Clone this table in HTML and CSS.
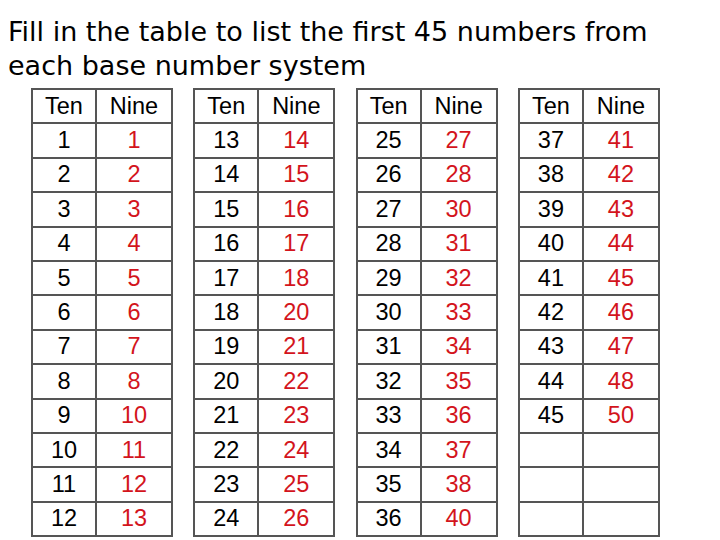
FILE: index.html
```html
<!DOCTYPE html>
<html>
<head>
<meta charset="utf-8">
<link rel="stylesheet" href="styles.css">
</head>
<body>
<h1 class="title">Fill in the table to list the first 45 numbers from<br>each base number system</h1>
<div class="tables">
  <div class="grid">
    <div class="cell head">Ten</div><div class="cell head">Nine</div>
    <div class="cell">1</div><div class="cell red">1</div>
    <div class="cell">2</div><div class="cell red">2</div>
    <div class="cell">3</div><div class="cell red">3</div>
    <div class="cell">4</div><div class="cell red">4</div>
    <div class="cell">5</div><div class="cell red">5</div>
    <div class="cell">6</div><div class="cell red">6</div>
    <div class="cell">7</div><div class="cell red">7</div>
    <div class="cell">8</div><div class="cell red">8</div>
    <div class="cell">9</div><div class="cell red">10</div>
    <div class="cell">10</div><div class="cell red">11</div>
    <div class="cell">11</div><div class="cell red">12</div>
    <div class="cell">12</div><div class="cell red">13</div>
  </div>
  <div class="grid">
    <div class="cell head">Ten</div><div class="cell head">Nine</div>
    <div class="cell">13</div><div class="cell red">14</div>
    <div class="cell">14</div><div class="cell red">15</div>
    <div class="cell">15</div><div class="cell red">16</div>
    <div class="cell">16</div><div class="cell red">17</div>
    <div class="cell">17</div><div class="cell red">18</div>
    <div class="cell">18</div><div class="cell red">20</div>
    <div class="cell">19</div><div class="cell red">21</div>
    <div class="cell">20</div><div class="cell red">22</div>
    <div class="cell">21</div><div class="cell red">23</div>
    <div class="cell">22</div><div class="cell red">24</div>
    <div class="cell">23</div><div class="cell red">25</div>
    <div class="cell">24</div><div class="cell red">26</div>
  </div>
  <div class="grid">
    <div class="cell head">Ten</div><div class="cell head">Nine</div>
    <div class="cell">25</div><div class="cell red">27</div>
    <div class="cell">26</div><div class="cell red">28</div>
    <div class="cell">27</div><div class="cell red">30</div>
    <div class="cell">28</div><div class="cell red">31</div>
    <div class="cell">29</div><div class="cell red">32</div>
    <div class="cell">30</div><div class="cell red">33</div>
    <div class="cell">31</div><div class="cell red">34</div>
    <div class="cell">32</div><div class="cell red">35</div>
    <div class="cell">33</div><div class="cell red">36</div>
    <div class="cell">34</div><div class="cell red">37</div>
    <div class="cell">35</div><div class="cell red">38</div>
    <div class="cell">36</div><div class="cell red">40</div>
  </div>
  <div class="grid">
    <div class="cell head">Ten</div><div class="cell head">Nine</div>
    <div class="cell">37</div><div class="cell red">41</div>
    <div class="cell">38</div><div class="cell red">42</div>
    <div class="cell">39</div><div class="cell red">43</div>
    <div class="cell">40</div><div class="cell red">44</div>
    <div class="cell">41</div><div class="cell red">45</div>
    <div class="cell">42</div><div class="cell red">46</div>
    <div class="cell">43</div><div class="cell red">47</div>
    <div class="cell">44</div><div class="cell red">48</div>
    <div class="cell">45</div><div class="cell red">50</div>
    <div class="cell"></div><div class="cell"></div>
    <div class="cell"></div><div class="cell"></div>
    <div class="cell"></div><div class="cell"></div>
  </div>
</div>
</body>
</html>
```
FILE: styles.css
```css
html, body {
  margin: 0;
  padding: 0;
  background: #ffffff;
}
body {
  width: 720px;
  height: 540px;
  overflow: hidden;
}
.title {
  margin: 0;
  padding: 15px 0 0 8px;
  font-family: "Comic Sans MS", "DejaVu Sans", sans-serif;
  font-weight: normal;
  font-size: 27px;
  line-height: 34px;
  color: #000;
  height: 74px;
  box-sizing: border-box;
  white-space: nowrap;
}
.tables {
  display: flex;
  gap: 20.3px;
  padding: 14px 0 0 31px;
}
.grid {
  display: grid;
  grid-template-columns: 62px 74px;
  grid-auto-rows: 32.4px;
  gap: 2px;
  padding: 2px;
  background: #555555;
}
.cell {
  background: #ffffff;
  display: flex;
  align-items: center;
  justify-content: center;
  font-family: "Liberation Sans", Arial, sans-serif;
  font-size: 23.5px;
  color: #000;
}
.red {
  color: #d3141c;
}
```
